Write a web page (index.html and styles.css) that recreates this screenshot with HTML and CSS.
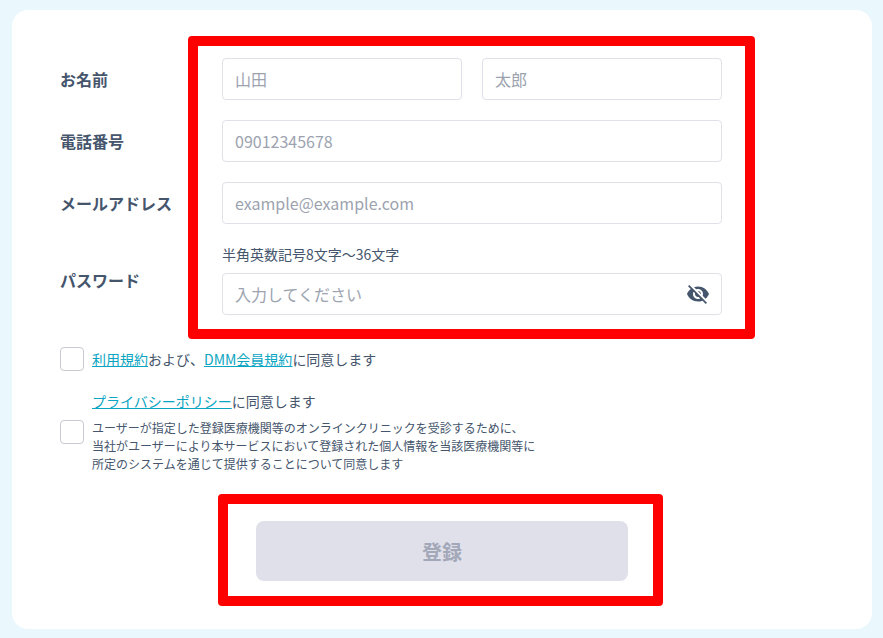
FILE: index.html
```html
<!DOCTYPE html>
<html lang="ja">
<head>
  <meta charset="UTF-8" />
  <meta name="viewport" content="width=device-width, initial-scale=1.0" />
  <title>会員登録</title>
  <link rel="stylesheet" href="styles.css">
</head>
<body>
  <form class="card">
    <div class="row">
      <label class="row-label">お名前</label>
      <div class="name-fields">
        <input class="text-input" type="text" placeholder="山田" />
        <input class="text-input" type="text" placeholder="太郎" />
      </div>
    </div>
    <div class="row">
      <label class="row-label">電話番号</label>
      <div class="field">
        <input class="text-input" type="tel" placeholder="09012345678" />
      </div>
    </div>
    <div class="row">
      <label class="row-label">メールアドレス</label>
      <div class="field">
        <input class="text-input" type="email" placeholder="example@example.com" />
      </div>
    </div>
    <div class="row">
      <label class="row-label">パスワード</label>
      <div class="field">
        <p class="hint">半角英数記号8文字〜36文字</p>
        <div class="password-box">
          <input class="text-input" type="text" placeholder="入力してください" />
          <svg class="eye-icon" viewBox="0 0 24 24" width="24" height="24" aria-hidden="true">
            <path fill="#45556c" d="M12 7c2.76 0 5 2.24 5 5 0 .65-.13 1.26-.36 1.83l2.92 2.92c1.51-1.26 2.7-2.89 3.43-4.75-1.73-4.39-6-7.5-11-7.5-1.4 0-2.74.25-3.98.7l2.16 2.16C10.74 7.13 11.35 7 12 7zM2 4.27l2.28 2.28.46.46C3.08 8.3 1.78 10.02 1 12c1.73 4.39 6 7.5 11 7.5 1.55 0 3.03-.3 4.38-.84l.42.42L19.73 22 21 20.73 3.27 3 2 4.27zM7.53 9.8l1.55 1.55c-.05.21-.08.43-.08.65 0 1.66 1.34 3 3 3 .22 0 .44-.03.65-.08l1.55 1.55c-.67.33-1.41.53-2.2.53-2.76 0-5-2.24-5-5 0-.79.2-1.53.53-2.2zm4.31-.78l3.15 3.15.02-.16c0-1.66-1.34-3-3-3l-.17.01z" />
          </svg>
        </div>
      </div>
    </div>

    <div class="agree agree-first">
      <span class="checkbox"></span>
      <p class="agree-text"><a href="#">利用規約</a>および、<a href="#">DMM会員規約</a>に同意します</p>
    </div>
    <p class="agree-text policy-text"><a href="#">プライバシーポリシー</a>に同意します</p>
    <div class="agree agree-small">
      <span class="checkbox"></span>
      <p class="small-text">ユーザーが指定した登録医療機関等のオンラインクリニックを受診するために、<br>当社がユーザーにより本サービスにおいて登録された個人情報を当該医療機関等に<br>所定のシステムを通じて提供することについて同意します</p>
    </div>

    <button class="submit" type="button" disabled>登録</button>

    <div class="mark mark-fields"></div>
    <div class="mark mark-submit"></div>
  </form>
</body>
</html>
```

FILE: styles.css
```css
* {
  box-sizing: border-box;
}
body {
  margin: 0;
  padding: 10px 11px 9px 12px;
  background: #eaf7fd;
  color: #45556c;
  font-family: "Noto Sans CJK JP", "Noto Sans", sans-serif;
}
.card {
  position: relative;
  height: 619px;
  padding: 48px;
  background: #fff;
  border-radius: 16px;
}
.row {
  display: flex;
  align-items: center;
  margin-bottom: 20px;
}
.row-label {
  width: 162px;
  flex: none;
  font-size: 16px;
  font-weight: 700;
  line-height: 24px;
}
.field {
  width: 500px;
}
.name-fields {
  display: flex;
  gap: 20px;
  width: 500px;
}
.text-input {
  display: block;
  width: 100%;
  min-width: 0;
  height: 42px;
  padding: 0 12px;
  border: 1px solid #e0e0eb;
  border-radius: 4px;
  background: #fff;
  font-family: inherit;
  font-size: 16px;
}
.text-input::placeholder {
  color: #9ca3af;
  opacity: 1;
}
.hint {
  margin: 0 0 9px;
  font-size: 14px;
  line-height: 20px;
}
.password-box {
  position: relative;
}
.eye-icon {
  position: absolute;
  top: 9px;
  right: 12px;
}
.agree {
  display: flex;
  gap: 8px;
}
.agree-first {
  align-items: center;
  margin-top: 32px;
}
.checkbox {
  width: 24px;
  height: 24px;
  flex: none;
  border: 1px solid #c9c9d2;
  border-radius: 4px;
  background: #fff;
}
.agree-text {
  margin: 0;
  font-size: 14px;
  line-height: 20px;
}
.agree-text a {
  color: #0aa5c2;
}
.policy-text {
  margin: 20px 0 0 32px;
}
.agree-small {
  margin-top: 8px;
}
.agree-small .checkbox {
  margin-top: 1px;
}
.small-text {
  margin: 0;
  font-size: 12px;
  line-height: 18px;
}
.submit {
  display: block;
  width: 372px;
  height: 60px;
  margin: 48px auto 0;
  border: none;
  border-radius: 8px;
  background: #e0e0eb;
  color: #a3a8b8;
  font-family: inherit;
  font-size: 20px;
  font-weight: 700;
}
.mark {
  position: absolute;
  border: 10px solid #f00;
  border-radius: 4px;
  pointer-events: none;
}
.mark-fields {
  left: 176px;
  top: 26px;
  width: 567px;
  height: 303px;
}
.mark-submit {
  left: 206px;
  top: 484px;
  width: 445px;
  height: 112px;
}
```
